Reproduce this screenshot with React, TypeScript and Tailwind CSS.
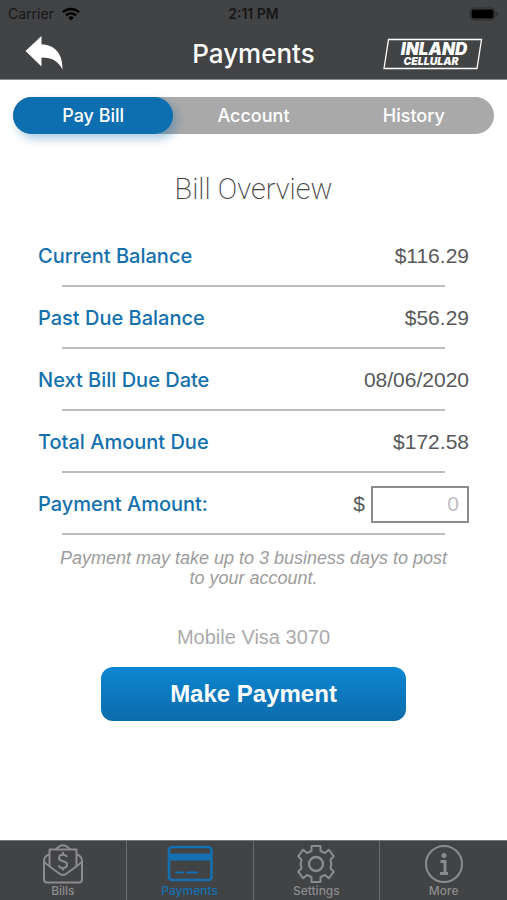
import type { ReactNode } from "react";

const tabs = ["Pay Bill", "Account", "History"];

const billRows = [
  { label: "Current Balance", value: "$116.29" },
  { label: "Past Due Balance", value: "$56.29" },
  { label: "Next Bill Due Date", value: "08/06/2020" },
  { label: "Total Amount Due", value: "$172.58" },
];

const navItems = [
  {
    title: "Bills",
    icon: (
      <svg viewBox="0 0 40 40" fill="none" stroke="currentColor" strokeWidth="2" strokeLinejoin="round" className="w-10 h-10" aria-hidden="true">
        <path d="M13 5.5Q20-3 27 5.5" />
        <path d="M6.5 22V5.500H33.5V22" />
        <path d="M6.5 10.5C2.5 11.5 1 14 1 17v18.500a3 3 0 0 0 3 3h32a3 3 0 0 0 3-3V17c0-3-1.500-5.500-5.500-6.500" />
        <path d="M1 17.5Q3 20 6 22l11 8q3 2 6 0l11-8q3-2 5-4.500" />
        <path d="M24 13c-.5-1.500-2-2.300-4-2.300-2.500 0-4 1.200-4 3.300s1.500 2.700 4 3.200 4 1.300 4 3.400-1.500 3.400-4 3.400-4-1-4-2.800M20 8v2.700M20 24v2.500" />
      </svg>
    ),
  },
  {
    title: "Payments",
    icon: (
      <svg viewBox="0 0 46 40" fill="none" stroke="currentColor" className="w-[46px] h-10" aria-hidden="true">
        <rect x="2" y="3" width="42.500" height="33" rx="3" strokeWidth="2.600" />
        <path d="M2 13h42" strokeWidth="7" />
        <path d="M8.5 28.500h8M19 28.500h12" strokeWidth="2.200" />
      </svg>
    ),
  },
  {
    title: "Settings",
    icon: (
      <svg viewBox="0 0 40 40" fill="none" stroke="currentColor" strokeWidth="2" strokeLinejoin="round" className="w-10 h-10" aria-hidden="true">
        <path d="M15.5 2h9v5l4.500 2 4-3.200 4.800 6.500-3.300 3.200.8 4.500-.8 4.500 3.300 3.200-4.800 6.500-4-3.200-4.500 2v5h-9v-5l-4.500-2-4 3.200-4.800-6.500L5.500 24.500 4.700 20l.8-4.500-3.300-3.200L7 5.800 11 9l4.500-2z" />
        <circle cx="20" cy="20" r="7" strokeWidth="2.400" />
      </svg>
    ),
  },
  {
    title: "More",
    icon: (
      <svg viewBox="0 0 40 40" fill="none" stroke="currentColor" strokeWidth="2" className="w-10 h-10" aria-hidden="true">
        <circle cx="20" cy="20" r="18" />
        <circle cx="20" cy="11.500" r="2.500" fill="currentColor" stroke="none" />
        <path d="M16.5 17.500H21V29M16 29.500h8" strokeWidth="2.800" />
      </svg>
    ),
  },
];

function StatusBar() {
  return (
    <div className="grid grid-cols-3 items-center h-7 px-2 text-sm leading-4 text-[#161617]">
      <div className="flex items-center gap-2">
        <span>Carrier</span>
        <svg viewBox="0 0 18 14" className="w-[18px] h-[14px]" aria-hidden="true">
          <g fill="none" stroke="#000" strokeWidth="2.400">
            <path d="M1 5.200a11.500 11.500 0 0 1 16 0" />
            <path d="M4 8.400a7.200 7.200 0 0 1 10 0" />
          </g>
          <path d="M9 13.500 6.200 10.700a4 4 0 0 1 5.600 0z" fill="#000" />
        </svg>
      </div>
      <span className="text-center font-semibold">2:11 PM</span>
      <svg viewBox="0 0 30 14" className="justify-self-end w-[30px] h-[14px]" aria-hidden="true">
        <rect x="1" y="1" width="25" height="12" rx="4" fill="none" stroke="#2b2c2e" />
        <rect x="2.500" y="2.500" width="22" height="9" rx="2" fill="#000" />
        <path d="M27.500 5v4q1.500-.5 1.500-2t-1.500-2z" fill="#222" />
      </svg>
    </div>
  );
}

function Logo() {
  return (
    <svg viewBox="0 0 100 32" className="w-[100px] h-8" role="img" aria-label="Inland Cellular">
      <path d="M5.500 1.500H98.500L94 30.500H1z" fill="none" stroke="#fff" strokeWidth="1.300" />
      <text fill="#fff" fontFamily="Inter, sans-serif" fontStyle="italic" fontWeight="900" textAnchor="middle">
        <tspan x="51" y="17" fontSize="17">INLAND</tspan>
        <tspan x="48" y="27" fontSize="10.500">CELLULAR</tspan>
      </text>
    </svg>
  );
}

function Row({ children }: { children: ReactNode }) {
  return (
    <div>
      <div className="flex items-center justify-between h-[60px] pt-0.5 text-xl">{children}</div>
      <div className="mx-6 h-0.5 bg-[#bdbdbd]" />
    </div>
  );
}

export default function App() {
  return (
    <div className="flex flex-col min-h-screen bg-white font-[Inter,'Liberation_Sans',sans-serif]">
      <header className="bg-[#424345] border-b border-[#8a8a8c]">
        <StatusBar />
        <div className="grid grid-cols-[1fr_auto_1fr] items-center h-[51px] px-6 text-white">
          <button type="button" aria-label="Back" className="justify-self-start">
            <svg viewBox="0 0 40 36" className="w-10 h-9" fill="#fff" aria-hidden="true">
              <path d="M1.500 15 17.500 0V8.500C29 8.500 39 16 38.500 33.500 34 25 28 21.500 17.500 21.500V30.500z" />
            </svg>
          </button>
          <h1 className="text-[26px] leading-8 font-medium">Payments</h1>
          <div className="justify-self-end">
            <Logo />
          </div>
        </div>
      </header>

      <main className="flex-1">
        <div className="grid grid-cols-3 mx-[13px] mt-[17px] h-[37px] rounded-full bg-[#a9a9a9] text-lg font-medium text-white">
          {tabs.map((tab, i) => (
            <button
              key={tab}
              type="button"
              aria-pressed={i === 0}
              className={i === 0 ? "rounded-full bg-[#0d6eb0] shadow-[4px_5px_10px_rgba(13,110,176,0.35)]" : "rounded-full"}
            >
              {tab}
            </button>
          ))}
        </div>

        <section className="px-[38px]">
          <h2 className="mt-[37px] mb-[18px] text-center font-[Roboto,sans-serif] text-[29px] leading-9 font-extralight text-[#444]">
            Bill Overview
          </h2>
          {billRows.map((row) => (
            <Row key={row.label}>
              <span className="font-medium text-[#1470ad]">{row.label}</span>
              <span className="font-['Liberation_Sans',sans-serif] text-[21px] text-[#58585a]">{row.value}</span>
            </Row>
          ))}
          <Row>
            <label htmlFor="amount" className="font-medium text-[#1470ad]">
              Payment Amount:
            </label>
            <div className="flex items-center gap-1.5 font-['Liberation_Sans',sans-serif] text-[21px] text-[#58585a]">
              <span>$</span>
              <input
                id="amount"
                type="text"
                inputMode="decimal"
                placeholder="0"
                className="w-[98px] h-[37px] pr-2 border-2 border-[#8c8c8c] text-right placeholder:text-[#bdbdbd]"
              />
            </div>
          </Row>
          <p className="mt-[13px] text-center font-['Liberation_Sans',sans-serif] text-lg leading-5 italic text-[#9c9c9c]">
            Payment may take up to 3 business days to post
            <br />
            to your account.
          </p>
        </section>

        <p className="mt-[35px] text-center font-['Liberation_Sans',sans-serif] text-xl text-[#ababab]">Mobile Visa 3070</p>
        <button
          type="button"
          className="block w-3/5 h-[54px] mx-auto mt-4 rounded-xl bg-linear-to-b from-[#0c86d2] to-[#0d6cab] font-['Liberation_Sans',sans-serif] text-[24px] font-bold text-white"
        >
          Make Payment
        </button>
      </main>

      <nav className="grid grid-cols-4 h-[60px] bg-[#424345] border-t border-[#77787a] divide-x divide-[#6b6c6e]">
        {navItems.map((item) => (
          <a
            key={item.title}
            href="#"
            aria-current={item.title === "Payments" ? "page" : undefined}
            className={`flex flex-col items-center pt-[3px] gap-px text-xs leading-3 font-medium ${item.title === "Payments" ? "text-[#1470b0]" : "text-[#8b8c8e]"}`}
          >
            {item.icon}
            {item.title}
          </a>
        ))}
      </nav>
    </div>
  );
}
